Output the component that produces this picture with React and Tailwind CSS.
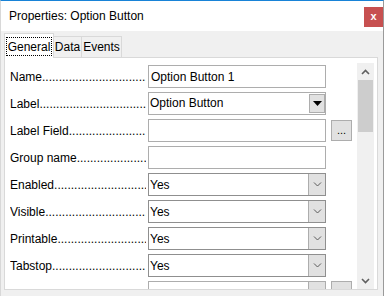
import React from "react";

const DOTS = ".".repeat(80);

function Label({ text }) {
  return (
    <div className="w-[138px] shrink-0 flex items-center whitespace-nowrap overflow-hidden pr-[2px]">
      <span className="shrink-0">{text}</span>
      <span className="overflow-hidden">{DOTS}</span>
    </div>
  );
}

function Chevron({ up = false, className = "" }) {
  return (
    <svg width="9" height="6" viewBox="0 0 9 6" className={className}>
      <path
        d={up ? "M1 5 L4.5 1.5 L8 5" : "M1 1 L4.5 4.5 L8 1"}
        fill="none"
        stroke="#606060"
        strokeWidth="1.6"
      />
    </svg>
  );
}

function ThinChevron() {
  return (
    <svg width="9" height="5" viewBox="0 0 9 5">
      <path d="M1 0.5 L4.5 4 L8 0.5" fill="none" stroke="#5a5a5a" strokeWidth="1" />
    </svg>
  );
}

function TextInput({ value }) {
  return (
    <div className="w-[178px] h-[23px] shrink-0 border border-[#adadad] bg-white flex items-center pl-[2px] text-black">
      {value}
    </div>
  );
}

function YesCombo() {
  return (
    <div className="w-[178px] h-[23px] shrink-0 border border-[#8f8f8f] bg-white flex items-stretch">
      <div className="flex-1 flex items-center pl-[1px]">Yes</div>
      <div className="w-[17px] border-l border-[#adadad] bg-[#e1e1e1] flex items-center justify-center">
        <ThinChevron />
      </div>
    </div>
  );
}

function DotButton() {
  return (
    <div className="w-[21px] h-[21px] shrink-0 ml-[5px] border border-[#adadad] bg-[#e1e1e1] flex items-end justify-center pb-[4px] text-[11px] leading-none">
      ...
    </div>
  );
}

export default function App() {
  return (
    <div
      className="w-[384px] h-[296px] overflow-hidden bg-[#f0f0f0] flex flex-col border-t border-t-[#1883d7] border-r border-r-[#9a9a9a] border-l border-l-[#d8d8d8] text-[12px] text-black"
      style={{ fontFamily: '"Liberation Sans", Arial, sans-serif' }}
    >
      {/* Title bar */}
      <div className="h-[30px] shrink-0 bg-white flex items-start justify-between">
        <div className="pl-[8px] pt-[8px] text-[12px] leading-[15px]">Properties: Option Button</div>
        <div className="mt-[6px] w-[19px] h-[20px] bg-[#c75050] flex items-center justify-center text-white font-bold text-[11px] leading-none pb-[2px]">
          x
        </div>
      </div>

      {/* Body */}
      <div className="flex-1 flex flex-col pl-[3px] pr-[5px] pt-[2px]">
        {/* Tabs */}
        <div className="h-[24px] flex items-end shrink-0">
          <div className="relative z-10 w-[50px] h-[25px] -mb-px border border-b-0 border-[#d9d9d9] bg-white flex items-start justify-center pt-[3px]">
            <div className="border border-dotted border-black px-[1px] h-[19px] flex items-center w-[46px] justify-center">
              General
            </div>
          </div>
          <div className="w-[28px] h-[21px] border border-l-0 border-b-0 border-[#d9d9d9] flex items-center justify-center">
            Data
          </div>
          <div className="w-[40px] h-[21px] border border-l-0 border-b-0 border-[#d9d9d9] flex items-center justify-center">
            Events
          </div>
        </div>

        {/* Panel */}
        <div className="h-[233px] shrink-0 border border-[#d9d9d9] bg-white flex overflow-hidden">
          <div className="flex-1 overflow-hidden pt-[7px] pl-[5px] flex flex-col gap-[4px]">
            <div className="flex items-center h-[23px] shrink-0">
              <Label text="Name" />
              <TextInput value="Option Button 1" />
            </div>
            <div className="flex items-center h-[23px] shrink-0">
              <Label text="Label" />
              <div className="w-[178px] h-[23px] shrink-0 border border-[#adadad] bg-white flex items-center pr-0">
                <div className="flex-1 pl-[1px] pb-[2px]">Option Button</div>
                <div className="w-[16px] h-[19px] border border-[#adadad] bg-[#e1e1e1] flex items-center justify-center">
                  <svg width="9" height="5" viewBox="0 0 9 5">
                    <path d="M0 0 L9 0 L4.5 5 Z" fill="#000" />
                  </svg>
                </div>
              </div>
            </div>
            <div className="flex items-center h-[23px] shrink-0">
              <Label text="Label Field" />
              <TextInput value="" />
              <DotButton />
            </div>
            <div className="flex items-center h-[23px] shrink-0">
              <Label text="Group name" />
              <TextInput value="" />
            </div>
            <div className="flex items-center h-[23px] shrink-0">
              <Label text="Enabled" />
              <YesCombo />
            </div>
            <div className="flex items-center h-[23px] shrink-0">
              <Label text="Visible" />
              <YesCombo />
            </div>
            <div className="flex items-center h-[23px] shrink-0">
              <Label text="Printable" />
              <YesCombo />
            </div>
            <div className="flex items-center h-[23px] shrink-0">
              <Label text="Tabstop" />
              <YesCombo />
            </div>
            <div className="flex items-start h-[23px] shrink-0">
              <Label text="" />
              <div className="w-[178px] h-[23px] shrink-0 border border-[#adadad] bg-white flex justify-end">
                <div className="w-[17px] h-full border-l border-[#adadad] bg-[#e1e1e1]" />
              </div>
              <div className="w-[21px] h-[21px] shrink-0 ml-[5px] border border-[#adadad] bg-[#e1e1e1]" />
            </div>
          </div>

          {/* Scrollbar */}
          <div className="w-[17px] mt-[5px] mr-[3px] shrink-0 bg-[#f0f0f0] flex flex-col">
            <div className="h-[17px] flex items-center justify-center">
              <Chevron up />
            </div>
            <div className="h-[52px] mx-[1px] bg-[#cdcdcd]" />
            <div className="flex-1" />
            <div className="h-[17px] flex items-center justify-center">
              <Chevron />
            </div>
          </div>
        </div>
      </div>
    </div>
  );
}
